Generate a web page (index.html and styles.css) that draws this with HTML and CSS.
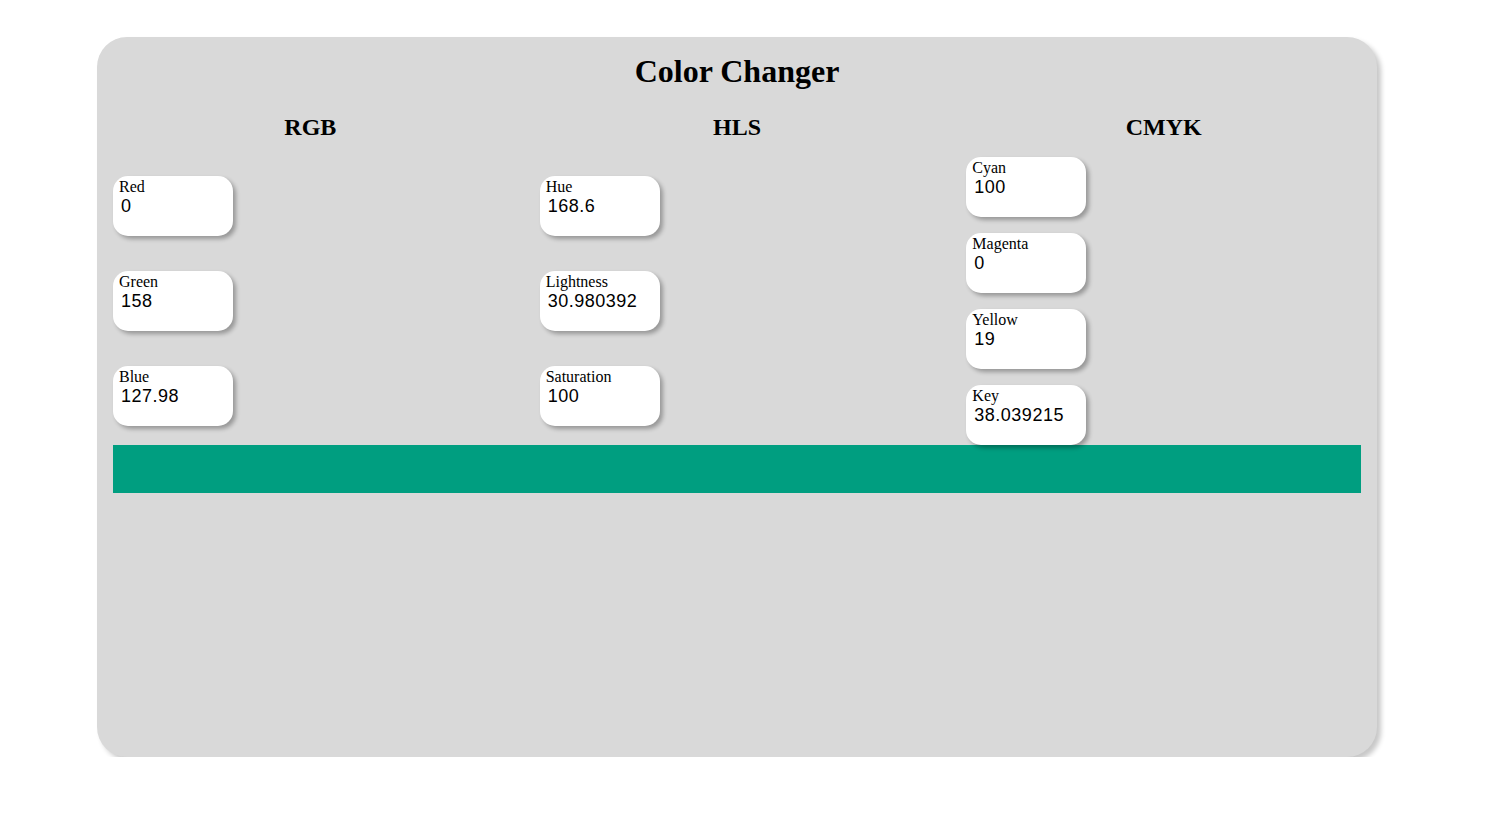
FILE: index.html
```html
<!DOCTYPE html>
<html>
<head>
<meta charset="utf-8">
<title>Color Changer</title>
<link rel="stylesheet" href="styles.css">
</head>
<body>
<div class="card">
  <h1 class="title">Color Changer</h1>
  <div class="columns">
    <div class="column">
      <h2 class="heading">RGB</h2>
      <div class="fields spread">
        <div class="field"><div class="label">Red</div><div class="value">0</div></div>
        <div class="field"><div class="label">Green</div><div class="value">158</div></div>
        <div class="field"><div class="label">Blue</div><div class="value">127.98</div></div>
      </div>
    </div>
    <div class="column">
      <h2 class="heading">HLS</h2>
      <div class="fields spread">
        <div class="field"><div class="label">Hue</div><div class="value">168.6</div></div>
        <div class="field"><div class="label">Lightness</div><div class="value">30.980392</div></div>
        <div class="field"><div class="label">Saturation</div><div class="value">100</div></div>
      </div>
    </div>
    <div class="column">
      <h2 class="heading">CMYK</h2>
      <div class="fields stack">
        <div class="field"><div class="label">Cyan</div><div class="value">100</div></div>
        <div class="field"><div class="label">Magenta</div><div class="value">0</div></div>
        <div class="field"><div class="label">Yellow</div><div class="value">19</div></div>
        <div class="field"><div class="label">Key</div><div class="value">38.039215</div></div>
      </div>
    </div>
  </div>
  <div class="swatch" style="background: rgb(0, 158, 128);"></div>
</div>
</body>
</html>
```

FILE: styles.css
```css
html, body {
  margin: 0;
  padding: 0;
  background: #ffffff;
  font-family: "Liberation Serif", "Times New Roman", serif;
  color: #000;
}

.card {
  box-sizing: border-box;
  width: 1280px;
  height: 720px;
  margin: 37px 0 0 97px;
  padding: 16px;
  background: #d9d9d9;
  border-radius: 30px;
  box-shadow: 4px 4px 5px rgba(0, 0, 0, 0.22);
}

.title {
  margin: 0;
  font-size: 32px;
  line-height: 37px;
  font-weight: bold;
  text-align: center;
}

.columns {
  display: grid;
  grid-template-columns: repeat(3, 1fr);
  column-gap: 32px;
  margin-top: 23px;
}

.column {
  display: flex;
  flex-direction: column;
}

.heading {
  margin: 0 0 16px;
  font-size: 24px;
  line-height: 28px;
  font-weight: bold;
  text-align: center;
}

.fields {
  display: flex;
  flex-direction: column;
  flex: 1;
}

.spread {
  justify-content: center;
  gap: 35px;
}

.stack {
  gap: 16px;
}

.field {
  box-sizing: border-box;
  width: 120px;
  height: 60px;
  padding: 2px 6px 0;
  background: #ffffff;
  border-radius: 15px;
  box-shadow: 3px 3px 4px rgba(0, 0, 0, 0.3);
  overflow: hidden;
}

.label {
  font-size: 16px;
  line-height: 18px;
}

.value {
  padding: 0 2px;
  font-family: "Liberation Sans", Arial, sans-serif;
  font-size: 18px;
  letter-spacing: 0.5px;
  line-height: 20px;
  white-space: nowrap;
  overflow: hidden;
  width: 88px;
}

.swatch {
  height: 48px;
}
```
